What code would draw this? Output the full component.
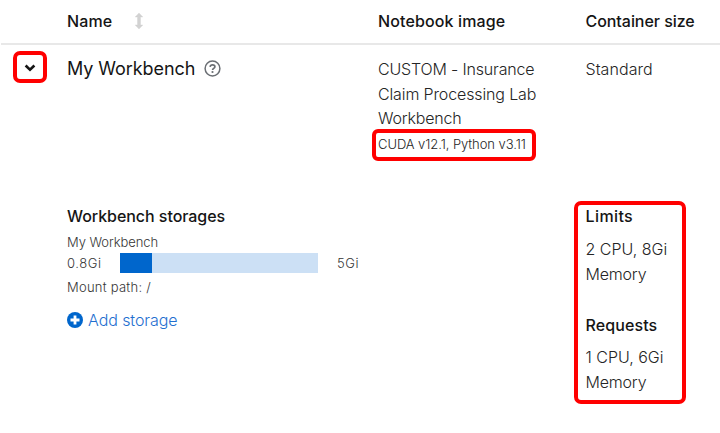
<script>
  const used = 0.8;
  const total = 5;
</script>

<main>
  <header class="row head">
    <div class="name"><span class="t-name">Name</span>
      <svg class="sort" width="8" height="16" viewBox="0 0 8 16"><path d="M4 0 7.8 4H5.5V12H7.8L4 16 .2 12H2.5V4H.2Z" fill="#d2d2d2" stroke="#d2d2d2" stroke-width=".4" stroke-linejoin="round" /></svg>
    </div>
    <div class="image"><span class="t-nb">Notebook image</span></div>
    <div class="size"><span class="t-cs">Container size</span></div>
  </header>

  <section class="row bench">
    <button class="toggle mark" aria-label="Collapse"><svg width="12" height="8" viewBox="0 0 12 8"><path d="M1.6 1.5 6 5.6 10.4 1.5" fill="none" stroke="#151515" stroke-width="2.6" /></svg></button>
    <div class="name"><span class="title">My Workbench</span>
      <svg class="help" width="17" height="17" viewBox="0 0 17 17"><circle cx="8.5" cy="8.5" r="7.4" fill="none" stroke="#6a6e73" stroke-width="1.5" /><path d="M6.1 6.9C6.3 5.4 7.2 4.8 8.5 4.8c1.4 0 2.4.8 2.4 1.9 0 1.7-2.3 1.6-2.3 3.2" fill="none" stroke="#6a6e73" stroke-width="1.7" /><circle cx="8.5" cy="12" r="1.1" fill="#6a6e73" /></svg>
    </div>
    <div class="image">
      <div><span class="t-custom">CUSTOM - Insurance</span></div>
      <div><span class="t-claim">Claim Processing Lab</span></div>
      <div><span class="t-work">Workbench</span></div>
      <div class="version"><span class="t-cuda">CUDA v12.1, Python v3.11</span></div>
    </div>
    <div class="size"><span class="t-std">Standard</span></div>
  </section>

  <section class="row details">
    <div class="name">
      <h2><span class="t-ws">Workbench storages</span></h2>
      <div class="small disk"><span class="t-mw">My Workbench</span></div>
      <div class="small usage">
        <span class="used"><span class="t-used">0.8Gi</span></span>
        <div class="bar"><div style="width: {(used / total) * 100}%"></div></div>
        <span class="t-total">5Gi</span>
      </div>
      <div class="small mount"><span class="t-mount">Mount path: /</span></div>
      <a class="add" href="#add"><svg width="16" height="16" viewBox="0 0 16 16"><circle cx="8" cy="8" r="8" fill="#06c" /><path d="M8 3.5v9M3.5 8h9" stroke="#fff" stroke-width="2.8" /></svg><span class="t-add">Add storage</span></a>
    </div>
    <div class="size resources">
      <h2><span class="t-lim">Limits</span></h2>
      <p><span>2 CPU, 8Gi</span><br /><span class="t-mem">Memory</span></p>
      <h2 class="second"><span class="t-req">Requests</span></h2>
      <p class="requested"><span>1 CPU, 6Gi</span><br /><span class="t-mem">Memory</span></p>
    </div>
  </section>
</main>

<style>
  :global(body) { background: #fff; }
  main {
    width: 720px; height: 433px; overflow: hidden; background: #fff;
    font-family: Inter, "Open Sans", sans-serif; font-size: 16px; font-weight: 300;
    line-height: 24.5px; color: #252525;
  }
  span { white-space: nowrap; }
  .row { position: relative; display: grid; grid-template-columns: 67px 311px 207.5px 1fr; }
  .name { grid-column: 2; }
  .image { grid-column: 3; }
  .size { grid-column: 4; }
  .head { box-sizing: border-box; height: 45px; margin-left: 1px; padding-top: 9px; border-bottom: 2px solid #e8e8e8; font-weight: 500; color: #151515; grid-template-columns: 66px 311px 207.5px 1fr; }
  .head .name { display: flex; align-items: flex-start; }
  .t-name { width: 68px; letter-spacing: .1px; }
  .t-nb { letter-spacing: .13px; }
  .t-cs { letter-spacing: -.05px; }
  .t-custom { letter-spacing: -.17px; }
  .t-claim { letter-spacing: -.13px; }
  .t-work { letter-spacing: -.18px; }
  .t-cuda { letter-spacing: -.07px; }
  .t-std { letter-spacing: .07px; }
  .t-ws { letter-spacing: -.05px; }
  .t-mw { letter-spacing: -.06px; }
  .t-used { letter-spacing: .55px; }
  .t-total { letter-spacing: .6px; }
  .t-mount { letter-spacing: .25px; }
  .t-add { letter-spacing: -.07px; }
  .t-lim { letter-spacing: .4px; }
  .t-req { letter-spacing: .1px; }
  .t-mem { letter-spacing: -.2px; }
  .sort { margin-top: 4px; }
  .bench { height: 146px; padding-top: 12px; box-sizing: border-box; }
  .toggle { position: absolute; left: 13px; top: 6px; width: 34px; height: 32px; box-sizing: border-box; border: 4px solid #f00; border-radius: 7px; background: #fff; padding: 0; display: grid; place-items: center; }
  .toggle svg { margin-top: 2px; }
  .bench .name { display: flex; align-items: flex-start; color: #151515; font-weight: 400; }
  .title { font-size: 18px; width: 136.5px; letter-spacing: -.07px; }
  .help { margin-top: 3px; }
  .version { position: relative; font-size: 13px; line-height: 28px; top: -1px; }
  .version::before { content: ""; position: absolute; left: -6px; top: -.5px; width: 164px; height: 32px; box-sizing: border-box; border: 4px solid #f00; border-radius: 6px; }
  .details { padding-top: 13px; }
  h2 { margin: 0; font-size: 16px; font-weight: 500; color: #151515; line-height: 24px; }
  p { margin: 9px 0 0; }
  .second { margin-top: 27px; }
  .requested { margin-top: 8px; }
  .small { font-size: 13px; line-height: 20px; color: #353535; }
  .disk { margin-top: 3.5px; }
  .usage { display: flex; align-items: center; margin-top: 1.5px; }
  .used { width: 53px; }
  .bar { width: 198px; height: 20px; margin-right: 19px; background: #cce0f5; }
  .bar div { height: 100%; background: #06c; }
  .mount { margin-top: 4px; }
  .add { display: flex; align-items: center; gap: 5px; margin-top: 11px; color: #1f6fd0; text-decoration: none; }
  .resources { position: relative; }
  .resources::before { content: ""; position: absolute; left: -11.5px; top: -3px; width: 112px; height: 203px; box-sizing: border-box; border: 4px solid #f00; border-radius: 7px; }
</style>
